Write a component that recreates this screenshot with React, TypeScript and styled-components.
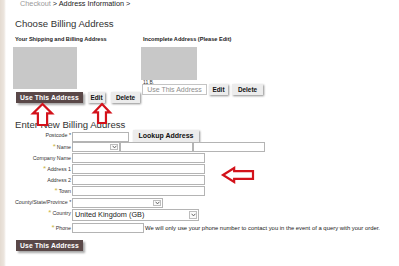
import React from 'react';
import styled, { createGlobalStyle } from 'styled-components';

const Global = createGlobalStyle`
  html, body { margin: 0; padding: 0; background: #fff; }
  body { font-family: "Liberation Sans", Arial, sans-serif; }
`;

const Page = styled.div`
  position: relative;
  width: 399px;
  height: 266px;
  overflow: hidden;
  box-sizing: border-box;
  padding-left: 15px;
  background: linear-gradient(to right, #e4dbd1 0px, #ece5de 4px, #fff 6px);
`;

const Crumbs = styled.div`
  margin: 0 0 0 5px;
  font-size: 7.3px;
  line-height: 7px;
  color: #222;
  white-space: nowrap;
`;

const CrumbMuted = styled.span`
  color: #9a9a9a;
`;

const Title = styled.h2<{ $mt: number }>`
  margin: ${(p) => p.$mt}px 0 0 0;
  font-size: 9.6px;
  line-height: 10px;
  font-weight: normal;
  color: #333;
  white-space: nowrap;
`;

const Cards = styled.div`
  display: flex;
  margin-left: -2px;
`;

const Card = styled.div<{ $w: number }>`
  width: ${(p) => p.$w}px;
  display: flex;
  flex-direction: column;
  align-items: flex-start;
`;

const CardHeading = styled.div`
  margin: 7px 0 0 2px;
  font-size: 5.6px;
  line-height: 6px;
  font-weight: bold;
  color: #222;
  white-space: nowrap;
`;

const Thumb = styled.div<{ $w: number; $h: number }>`
  margin-top: 5px;
  width: ${(p) => p.$w}px;
  height: ${(p) => p.$h}px;
  background: #c8c8c8;
`;

const TinyText = styled.div`
  height: 4px;
  overflow: hidden;
  font-size: 5px;
  line-height: 5px;
  color: #333;
  margin-left: 2px;
`;

const ButtonRow = styled.div<{ $mt: number; $ml: number }>`
  display: flex;
  align-items: center;
  margin: ${(p) => p.$mt}px 0 0 ${(p) => p.$ml}px;
`;

const DarkButton = styled.button`
  box-sizing: border-box;
  width: 67px;
  height: 11px;
  padding: 0;
  border: none;
  background: #5a4848;
  color: #fff;
  font-family: inherit;
  font-weight: bold;
  font-size: 6.8px;
  line-height: 11px;
  letter-spacing: 0.1px;
  box-shadow: 2px 2px 2px rgba(0, 0, 0, 0.35);
  white-space: nowrap;
`;

const GhostButton = styled.button`
  box-sizing: border-box;
  width: 65px;
  height: 11px;
  padding: 0;
  border: 1px solid #c4c4c4;
  background: #fff;
  color: #8e8e8e;
  font-family: inherit;
  font-size: 7px;
  line-height: 9px;
  white-space: nowrap;
`;

const LightButton = styled.button<{ $w: number; $ml: number }>`
  box-sizing: border-box;
  width: ${(p) => p.$w}px;
  height: 11px;
  margin-left: ${(p) => p.$ml}px;
  padding: 0;
  border: none;
  background: #ececec;
  color: #111;
  font-family: inherit;
  font-weight: bold;
  font-size: 6.4px;
  line-height: 11px;
  box-shadow: 1px 1px 2px rgba(0, 0, 0, 0.45);
  white-space: nowrap;
`;

const Form = styled.div`
  display: flex;
  flex-direction: column;
`;

const Row = styled.div<{ $mt: number }>`
  display: flex;
  align-items: flex-start;
  margin-top: ${(p) => p.$mt}px;
`;

const Label = styled.div<{ $pt: number }>`
  box-sizing: border-box;
  width: 57px;
  padding: ${(p) => p.$pt}px 1px 0 0;
  text-align: right;
  font-size: 5.3px;
  line-height: 6px;
  color: #333;
  white-space: nowrap;
`;

const Req = styled.span`
  color: #c9b447;
  font-size: 8px;
  line-height: 6px;
  margin-right: 1px;
`;

const Input = styled.input<{ $w: number; $mt?: number }>`
  box-sizing: border-box;
  width: ${(p) => p.$w}px;
  height: 10px;
  margin: ${(p) => p.$mt ?? 0}px 0 0 0;
  padding: 0;
  border: 1px solid #b4b4b4;
  background: #fff;
  outline: none;
`;

const SelectShell = styled.div<{ $w: number; $h: number }>`
  box-sizing: border-box;
  width: ${(p) => p.$w}px;
  height: ${(p) => p.$h}px;
  display: flex;
  align-items: stretch;
  border: 1px solid #b4b4b4;
  background: #fff;
`;

const SelectValue = styled.div`
  flex: 1;
  padding-left: 2px;
  font-size: 7.3px;
  line-height: 10px;
  color: #222;
  white-space: nowrap;
  overflow: hidden;
`;

const Chevron = styled.div`
  width: 8px;
  margin: 1px;
  box-sizing: border-box;
  border: 1px solid #bdbdbd;
  display: flex;
  align-items: center;
  justify-content: center;
  background: #fafafa;
`;

const LookupButton = styled(LightButton)`
  height: 12px;
  font-size: 7px;
  line-height: 12px;
`;

const Note = styled.div`
  margin-left: 1px;
  padding-top: 2px;
  font-size: 5.9px;
  line-height: 6px;
  color: #222;
  white-space: nowrap;
`;

const ArrowLayer = styled.svg<{ $x: number; $y: number }>`
  position: absolute;
  left: ${(p) => p.$x}px;
  top: ${(p) => p.$y}px;
  overflow: visible;
`;

const ChevronIcon = () => (
  <svg width="5" height="4" viewBox="0 0 5 4">
    <path d="M0.6 0.8 L2.5 2.9 L4.4 0.8" fill="none" stroke="#555" strokeWidth="0.9" />
  </svg>
);

const Select: React.FC<{ w: number; h?: number; value?: string }> = ({ w, h = 10, value = '' }) => (
  <SelectShell $w={w} $h={h}>
    <SelectValue>{value}</SelectValue>
    <Chevron>
      <ChevronIcon />
    </Chevron>
  </SelectShell>
);

const UpArrow: React.FC<{ x: number; y: number; w: number; h: number }> = ({ x, y, w, h }) => {
  const head = h * 0.45;
  const sw = w * 0.22;
  const cx = w / 2;
  const d = `M${cx} 1 L${w - 1} ${head} L${cx + sw} ${head} L${cx + sw} ${h - 1} L${cx - sw} ${h - 1} L${cx - sw} ${head} L1 ${head} Z`;
  return (
    <ArrowLayer $x={x} $y={y} width={w} height={h} viewBox={`0 0 ${w} ${h}`}>
      <path d={d} fill="#fff" stroke="#d3121b" strokeWidth="2.2" strokeLinejoin="miter" />
    </ArrowLayer>
  );
};

const LeftArrow: React.FC<{ x: number; y: number; w: number; h: number }> = ({ x, y, w, h }) => {
  const head = w * 0.38;
  const sh = h * 0.24;
  const cy = h / 2;
  const d = `M1 ${cy} L${head} 1 L${head} ${cy - sh} L${w - 1} ${cy - sh} L${w - 1} ${cy + sh} L${head} ${cy + sh} L${head} ${h - 1} Z`;
  return (
    <ArrowLayer $x={x} $y={y} width={w} height={h} viewBox={`0 0 ${w} ${h}`}>
      <path d={d} fill="#fff" stroke="#d3121b" strokeWidth="2.2" />
    </ArrowLayer>
  );
};

export default function App() {
  return (
    <Page>
      <Global />
      <Crumbs>
        <CrumbMuted>Checkout</CrumbMuted> &gt; Address Information &gt;
      </Crumbs>
      <Title $mt={12}>Choose Billing Address</Title>
      <Cards>
        <Card $w={128}>
          <CardHeading>Your Shipping and Billing Address</CardHeading>
          <Thumb $w={64} $h={42} />
          <ButtonRow $mt={3} $ml={3}>
            <DarkButton>Use This Address</DarkButton>
            <LightButton $w={17} $ml={5}>Edit</LightButton>
            <LightButton $w={29} $ml={6}>Delete</LightButton>
          </ButtonRow>
        </Card>
        <Card $w={160}>
          <CardHeading>Incomplete Address (Please Edit)</CardHeading>
          <Thumb $w={56} $h={33} />
          <TinyText>11 B.</TinyText>
          <ButtonRow $mt={0} $ml={1}>
            <GhostButton>Use This Address</GhostButton>
            <LightButton $w={19} $ml={2}>Edit</LightButton>
            <LightButton $w={31} $ml={4}>Delete</LightButton>
          </ButtonRow>
        </Card>
      </Cards>
      <Title $mt={17}>Enter New Billing Address</Title>
      <Form>
        <Row $mt={0}>
          <Label $pt={2}>Postcode *</Label>
          <Input $w={57} $mt={2} />
          <LookupButton $w={66} $ml={4}>Lookup Address</LookupButton>
        </Row>
        <Row $mt={0}>
          <Label $pt={2}><Req>*</Req>Name</Label>
          <Select w={48} />
          <Input $w={73} />
          <Input $w={72} />
        </Row>
        <Row $mt={1}>
          <Label $pt={2}>Company Name</Label>
          <Input $w={133} />
        </Row>
        <Row $mt={1}>
          <Label $pt={2}><Req>*</Req>Address 1</Label>
          <Input $w={133} />
        </Row>
        <Row $mt={1}>
          <Label $pt={2}>Address 2</Label>
          <Input $w={133} />
        </Row>
        <Row $mt={1}>
          <Label $pt={2}><Req>*</Req>Town</Label>
          <Input $w={133} />
        </Row>
        <Row $mt={2}>
          <Label $pt={1}>County/State/Province *</Label>
          <Select w={91} />
        </Row>
        <Row $mt={1}>
          <Label $pt={1}><Req>*</Req>Country</Label>
          <Select w={127} h={12} value="United Kingdom (GB)" />
        </Row>
        <Row $mt={2}>
          <Label $pt={2}><Req>*</Req>Phone</Label>
          <Input $w={72} />
          <Note>We will only use your phone number to contact you in the event of a query with your order.</Note>
        </Row>
        <ButtonRow $mt={7} $ml={1}>
          <DarkButton>Use This Address</DarkButton>
        </ButtonRow>
      </Form>
      <UpArrow x={32} y={103} w={21} h={23} />
      <UpArrow x={93} y={103} w={18} h={21} />
      <LeftArrow x={222} y={167} w={32} h={16} />
    </Page>
  );
}
